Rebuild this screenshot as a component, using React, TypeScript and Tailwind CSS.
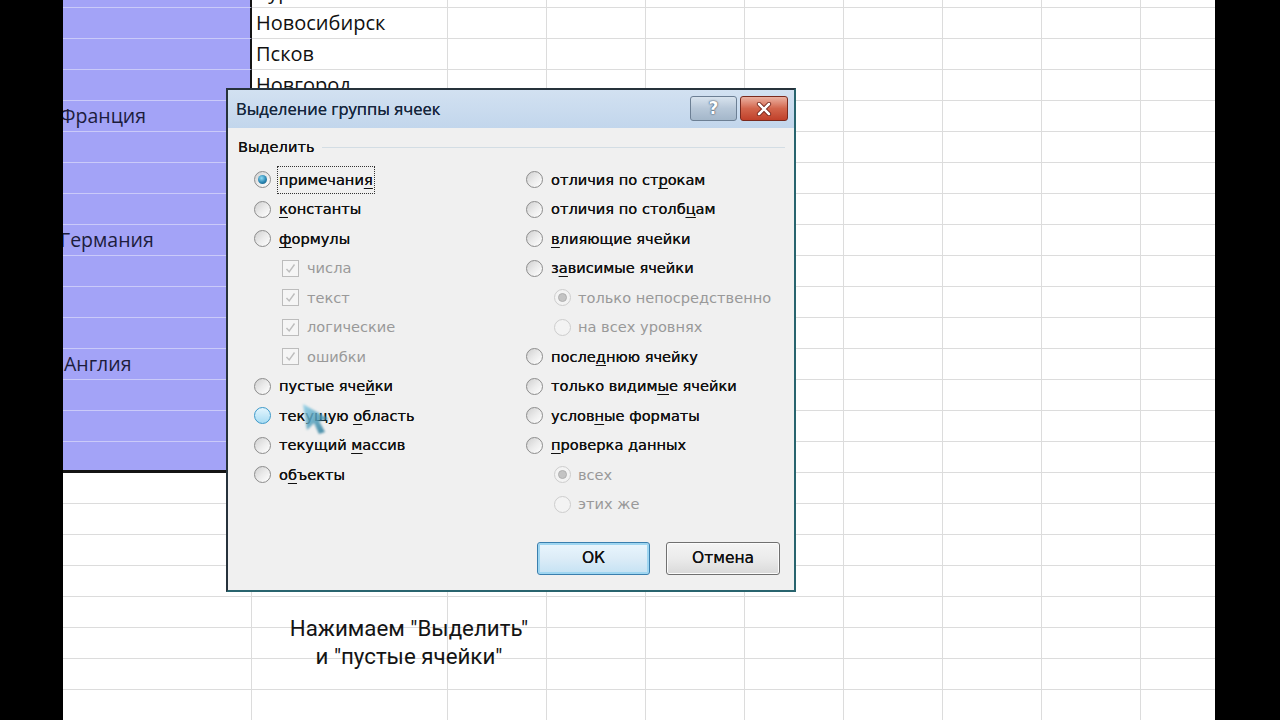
import React from "react";

const ROWS = 24;
const COLS = [99, 99, 99, 99, 99, 99, 99, 99];

const cellText: Record<number, string> = {
  0: "Курган",
  1: "Новосибирск",
  2: "Псков",
  3: "Новгород",
};

const purpleText: Record<number, { text: string; cls: string }> = {
  4: { text: "Франция", cls: "-ml-[3px]" },
  8: { text: "Германия", cls: "-ml-[3px]" },
  12: { text: "Англия", cls: "ml-[1px]" },
};

function Sheet() {
  return (
    <div className="h-[720px] w-[1152px] overflow-hidden bg-white">
      <div className="-mt-[23px] flex flex-col">
        {Array.from({ length: ROWS }).map((_, r) => {
          const purple = r < 16;
          const last = r === 15;
          return (
            <div key={r} className="flex h-[31px] shrink-0">
              <div
                className={
                  purple
                    ? last
                      ? "flex w-[189px] shrink-0 items-center overflow-hidden border-r-2 border-b-[3px] border-r-[#141414] border-b-[#141414] bg-[#a3a3f7]"
                      : "flex w-[189px] shrink-0 items-center overflow-hidden border-r-2 border-b border-r-[#141414] border-b-[#cacaf9] bg-[#a3a3f7]"
                    : "w-[189px] shrink-0 border-r border-b border-[#dcdcdc]"
                }
              >
                {purpleText[r] && (
                  <span className={`${purpleText[r].cls} whitespace-nowrap font-['Open_Sans',sans-serif] text-[19.5px] text-[#1c1c3c]`}>
                    {purpleText[r].text}
                  </span>
                )}
              </div>
              <div className="flex w-[196px] shrink-0 items-center overflow-hidden whitespace-nowrap border-r border-b border-[#dcdcdc] pl-[4px] font-['Open_Sans',sans-serif] text-[20px] text-[#111]">
                {cellText[r] ?? ""}
              </div>
              {COLS.map((w, c) => (
                <div key={c} className="w-[99px] shrink-0 border-r border-b border-[#dcdcdc]" />
              ))}
            </div>
          );
        })}
      </div>
    </div>
  );
}

function Radio({ checked, disabled, hover }: { checked?: boolean; disabled?: boolean; hover?: boolean }) {
  const ring = disabled
    ? "border-[#cdcdcd] bg-[#f3f3f3]"
    : hover
    ? "border-[#3b98c9] bg-gradient-to-b from-[#e3f5fd] to-[#a8dcf3]"
    : "border-[#8c8c8c] bg-gradient-to-br from-[#d0d0d0] via-[#ebebeb] to-[#ffffff]";
  return (
    <span className={`flex h-[17px] w-[17px] shrink-0 items-center justify-center rounded-full border ${ring}`}>
      {checked && (
        <span
          className={
            disabled
              ? "h-[9px] w-[9px] rounded-full border border-[#b0b0b0] bg-[#c4c4c4]"
              : "h-[9px] w-[9px] rounded-full bg-[radial-gradient(circle_at_40%_35%,#8fdcf5,#2a86b3_55%,#13506f)]"
          }
        />
      )}
    </span>
  );
}

function Check() {
  return (
    <span className="flex h-[17px] w-[17px] shrink-0 items-center justify-center border border-[#bcbcbc] bg-[#f5f5f5]">
      <svg width="11" height="11" viewBox="0 0 11 11">
        <path d="M1.5 6 L4.2 9 L9.5 1.5" fill="none" stroke="#bdbdbd" strokeWidth="1.4" />
      </svg>
    </span>
  );
}

function Label({ text, u, disabled }: { text: string; u?: number; disabled?: boolean }) {
  const color = disabled ? "text-[#999999]" : "text-[#111111] [text-shadow:0_0_0.4px_#111]";
  if (u === undefined) return <span className={`whitespace-nowrap ${color}`}>{text}</span>;
  return (
    <span className={`whitespace-nowrap ${color}`}>
      {text.slice(0, u)}
      <span className="underline decoration-1 underline-offset-[3px]">{text[u]}</span>
      {text.slice(u + 1)}
    </span>
  );
}

type Item =
  | { kind: "radio"; text: string; u?: number; checked?: boolean; hover?: boolean; focus?: boolean }
  | { kind: "sub"; text: string; checked?: boolean }
  | { kind: "check"; text: string };

const left: Item[] = [
  { kind: "radio", text: "примечания", u: 9, checked: true, focus: true },
  { kind: "radio", text: "константы", u: 0 },
  { kind: "radio", text: "формулы", u: 0 },
  { kind: "check", text: "числа" },
  { kind: "check", text: "текст" },
  { kind: "check", text: "логические" },
  { kind: "check", text: "ошибки" },
  { kind: "radio", text: "пустые ячейки", u: 10 },
  { kind: "radio", text: "текущую область", u: 8, hover: true },
  { kind: "radio", text: "текущий массив", u: 8 },
  { kind: "radio", text: "объекты", u: 1 },
];

const right: Item[] = [
  { kind: "radio", text: "отличия по строкам", u: 13 },
  { kind: "radio", text: "отличия по столбцам", u: 16 },
  { kind: "radio", text: "влияющие ячейки", u: 0 },
  { kind: "radio", text: "зависимые ячейки", u: 1 },
  { kind: "sub", text: "только непосредственно", checked: true },
  { kind: "sub", text: "на всех уровнях" },
  { kind: "radio", text: "последнюю ячейку", u: 5 },
  { kind: "radio", text: "только видимые ячейки", u: 12 },
  { kind: "radio", text: "условные форматы", u: 5 },
  { kind: "radio", text: "проверка данных", u: 0 },
  { kind: "sub", text: "всех", checked: true },
  { kind: "sub", text: "этих же" },
];

function Row({ item }: { item: Item }) {
  if (item.kind === "check") {
    return (
      <div className="flex h-[29.5px] items-center gap-[8px] pl-[28px]">
        <Check />
        <Label text={item.text} disabled />
      </div>
    );
  }
  if (item.kind === "sub") {
    return (
      <div className="flex h-[29.5px] items-center gap-[7px] pl-[28px]">
        <Radio checked={item.checked} disabled />
        <Label text={item.text} disabled />
      </div>
    );
  }
  return (
    <div className="flex h-[29.5px] items-center gap-[6px]">
      <Radio checked={item.checked} hover={item.hover} />
      <span className={item.focus ? "border border-dotted border-[#333] px-[1px] py-[2px]" : "px-[2px]"}>
        <Label text={item.text} u={item.u} />
      </span>
    </div>
  );
}

function Dialog() {
  return (
    <div className="absolute left-[226px] top-[88px] flex h-[504px] w-[570px] flex-col border-2 border-t-[#26323b] border-l-[#26323b] border-r-[#28646e] border-b-[#28646e] font-['DejaVu_Sans',sans-serif] text-[14.6px]">
      <div className="flex h-[38px] shrink-0 items-center justify-between bg-gradient-to-b from-[#d2e1f1] to-[#c2d6ec] pl-[8px] pr-[6px]">
        <span className="font-['Open_Sans',sans-serif] text-[16.5px] text-[#16263c] [text-shadow:0_0_0.4px_#16263c]">Выделение группы ячеек</span>
        <div className="flex gap-[3px] self-start pt-[6px]">
          <div className="flex h-[25px] w-[47px] items-center justify-center rounded-[3px] border border-[#6c7f94] bg-gradient-to-b from-[#d8e3ee] via-[#b7c7d8] to-[#a4b7ca]">
            <span className="font-['DejaVu_Sans',sans-serif] text-[17px] font-bold leading-none text-white [text-shadow:0_0_2px_#3b4b5c,0_0_1px_#3b4b5c]">?</span>
          </div>
          <div className="flex h-[25px] w-[48px] items-center justify-center rounded-[3px] border border-[#7a2a1e] bg-gradient-to-b from-[#eab1a2] via-[#d2654c] to-[#c0402a]">
            <svg width="16" height="14" viewBox="0 0 16 14">
              <path d="M3 2 L13 12 M13 2 L3 12" stroke="#6a1a10" strokeWidth="4.2" strokeLinecap="round" />
              <path d="M3 2 L13 12 M13 2 L3 12" stroke="#ffffff" strokeWidth="2.6" strokeLinecap="round" />
            </svg>
          </div>
        </div>
      </div>
      <div className="relative flex flex-1 flex-col bg-[#f0f0f0]">
        <div className="mt-[9px] flex h-[20px] items-center pl-[10px] pr-[9px]">
          <span className="text-[#111] [text-shadow:0_0_0.4px_#111]">Выделить</span>
          <div className="ml-[7px] h-px flex-1 bg-[#d3dde4]" />
        </div>
        <div className="mt-[8px] flex pl-[26px]">
          <div className="flex w-[272px] flex-col">
            {left.map((it, i) => (
              <Row key={i} item={it} />
            ))}
          </div>
          <div className="flex flex-col">
            {right.map((it, i) => (
              <Row key={i} item={it} />
            ))}
          </div>
        </div>
        <div className="mt-[23px] flex justify-end gap-[16px] pr-[14px]">
          <div className="flex h-[33px] w-[113px] items-center justify-center rounded-[3px] border border-[#3a7fae] bg-gradient-to-b from-[#eaf6fd] via-[#dcecf7] to-[#c4e2f3] shadow-[inset_0_0_0_2px_#9fd6f1]">
            <span className="text-[15.5px] text-[#111] [text-shadow:0_0_0.4px_#111]">ОК</span>
          </div>
          <div className="flex h-[33px] w-[114px] items-center justify-center rounded-[3px] border border-[#707070] bg-gradient-to-b from-[#f4f4f4] via-[#ebebeb] to-[#d9d9d9] shadow-[inset_0_0_0_1px_#fbfbfb]">
            <span className="text-[15.5px] text-[#111] [text-shadow:0_0_0.4px_#111]">Отмена</span>
          </div>
        </div>
      </div>
    </div>
  );
}

function Cursor() {
  return (
    <svg className="absolute left-[301px] top-[402px] blur-[0.8px]" width="32" height="34" viewBox="0 0 32 34">
      <defs>
        <linearGradient id="cg" x1="0" y1="0" x2="1" y2="1">
          <stop offset="0" stopColor="#8ccfe8" />
          <stop offset="1" stopColor="#1c6f8f" />
        </linearGradient>
      </defs>
      <path d="M2 2 L28 17 L18 19 L24 30 L18 32 L13 21 L6 28 Z" fill="url(#cg)" opacity="0.85" />
    </svg>
  );
}

export default function App() {
  return (
    <div className="relative flex h-[720px] w-[1280px] overflow-hidden bg-black">
      <div className="w-[63px] shrink-0 bg-black" />
      <Sheet />
      <div className="w-[65px] shrink-0 bg-black" />
      <Dialog />
      <Cursor />
      <div className="absolute left-[409px] top-[614px] -translate-x-1/2 whitespace-nowrap text-center font-['Roboto',sans-serif] text-[22.3px] leading-[28px] text-[#141414]">
        <div>Нажимаем "Выделить"</div>
        <div>и "пустые ячейки"</div>
      </div>
    </div>
  );
}
